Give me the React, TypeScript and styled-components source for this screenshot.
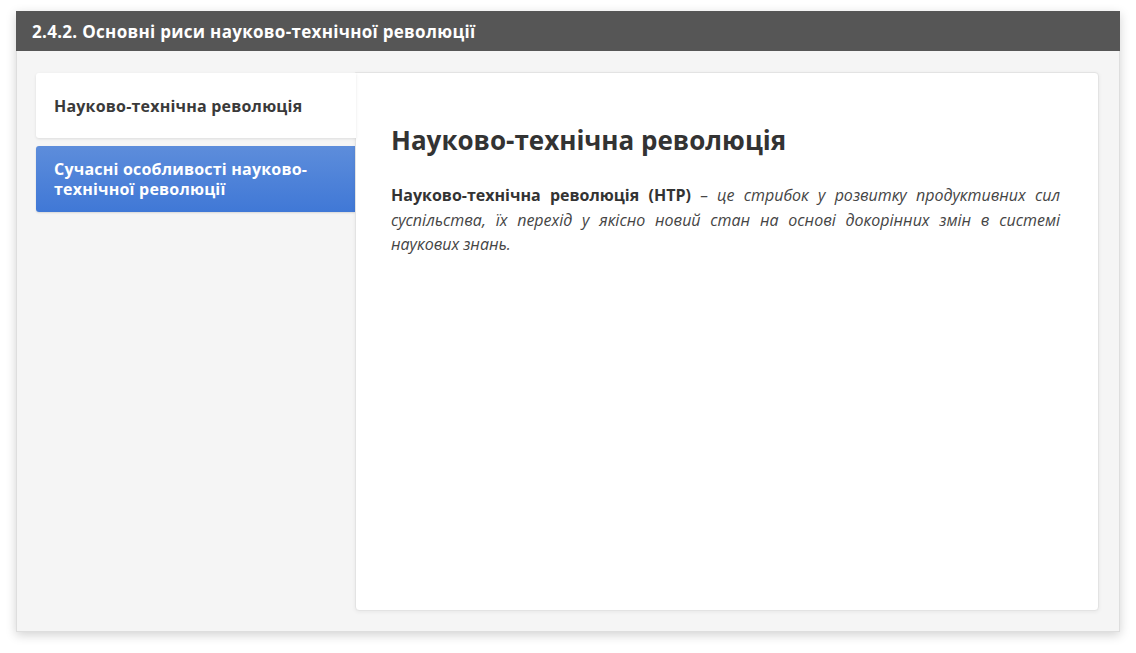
import React from "react";
import styled, { createGlobalStyle } from "styled-components";

const Global = createGlobalStyle`
  html, body { margin: 0; padding: 0; background: #ffffff; }
  body { font-family: "Open Sans", "Noto Sans", sans-serif; }
  * { box-sizing: border-box; }
`;

const Page = styled.div`
  padding: 11px 16px 21px 16px;
  width: 1136px;
  height: 653px;
`;

const Frame = styled.div`
  width: 1104px;
  height: 621px;
  display: flex;
  flex-direction: column;
  background: #f5f5f5;
  border: 1px solid #dedede;
  box-shadow: 0 3px 10px rgba(0, 0, 0, 0.18);
`;

const Header = styled.div`
  height: 40px;
  flex: none;
  background: #565656;
  color: #ffffff;
  font-weight: 700;
  font-size: 17px;
  letter-spacing: 0.3px;
  display: flex;
  align-items: center;
  padding-left: 16px;
  margin: -1px -1px 0 -1px;
`;

const Body = styled.div`
  flex: 1;
  display: flex;
  padding: 21px 20px 20px 19px;
`;

const Tabs = styled.div`
  width: 319px;
  flex: none;
  display: flex;
  flex-direction: column;
  gap: 8px;
  padding-top: 1px;
`;

const Tab = styled.div<{ $variant: "light" | "blue" }>`
  height: ${(p) => (p.$variant === "light" ? "65px" : "66px")};
  display: flex;
  align-items: center;
  padding: 0 20px 0 18px;
  font-weight: 700;
  font-size: 16px;
  letter-spacing: 0.2px;
  line-height: 20px;
  border-radius: 3px 0 0 3px;
  ${(p) =>
    p.$variant === "light"
      ? `
    background: #ffffff;
    color: #3a3a3a;
    box-shadow: 0 1px 3px rgba(0,0,0,0.10);
    position: relative;
    z-index: 2;
    margin-right: -1px;
  `
      : `
    background: linear-gradient(to bottom, #5d8ddb, #4078d6);
    color: #ffffff;
    box-shadow: 0 1px 2px rgba(0,0,0,0.12);
  `}
`;

const Content = styled.div`
  flex: 1;
  background: #ffffff;
  border: 1px solid #e3e3e3;
  border-radius: 0 4px 4px 4px;
  box-shadow: 0 1px 4px rgba(0, 0, 0, 0.06);
  padding: 47px 38px 20px 35px;
`;

const Title = styled.h2`
  margin: 0 0 23px 0;
  font-size: 26px;
  line-height: 40px;
  font-weight: 700;
  color: #333333;
`;

const Para = styled.p`
  margin: 0;
  font-size: 16px;
  line-height: 24.5px;
  color: #454545;
  text-align: justify;
  em { font-style: italic; }
  strong { font-weight: 700; color: #333333; }
`;

export default function App() {
  return (
    <>
      <Global />
      <Page>
        <Frame>
          <Header>2.4.2. Основні риси науково-технічної революції</Header>
          <Body>
            <Tabs>
              <Tab $variant="light">Науково-технічна революція</Tab>
              <Tab $variant="blue">Сучасні особливості науково-технічної революції</Tab>
            </Tabs>
            <Content>
              <Title>Науково-технічна революція</Title>
              <Para>
                <strong>Науково-технічна революція (НТР)</strong>{" "}
                <em>
                  – це стрибок у розвитку продуктивних сил суспільства, їх перехід у якісно новий
                  стан на основі докорінних змін в системі наукових знань.
                </em>
              </Para>
            </Content>
          </Body>
        </Frame>
      </Page>
    </>
  );
}
